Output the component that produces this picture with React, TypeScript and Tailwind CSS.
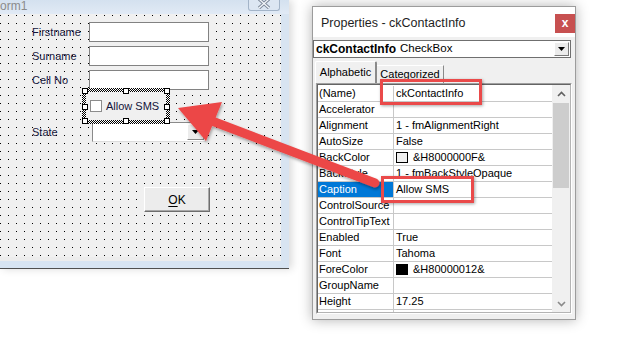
import React from 'react';

type PropRow = {
  name: string;
  value: string;
  swatch?: string;
  selected?: boolean;
};

const propRows: PropRow[] = [
  { name: '(Name)', value: 'ckContactInfo' },
  { name: 'Accelerator', value: '' },
  { name: 'Alignment', value: '1 - fmAlignmentRight' },
  { name: 'AutoSize', value: 'False' },
  { name: 'BackColor', value: '&H8000000F&', swatch: 'bg-[#f0f0f0]' },
  { name: 'BackStyle', value: '1 - fmBackStyleOpaque' },
  { name: 'Caption', value: 'Allow SMS', selected: true },
  { name: 'ControlSource', value: '' },
  { name: 'ControlTipText', value: '' },
  { name: 'Enabled', value: 'True' },
  { name: 'Font', value: 'Tahoma' },
  { name: 'ForeColor', value: '&H80000012&', swatch: 'bg-black' },
  { name: 'GroupName', value: '' },
  { name: 'Height', value: '17.25' },
  { name: '', value: '' },
];

function DownTriangle() {
  return (
    <svg width="7" height="4" viewBox="0 0 7 4">
      <polygon points="0,0 7,0 3.5,4" fill="#000" />
    </svg>
  );
}

function TextBox() {
  return <div className="w-[120px] h-[20px] bg-white border border-[#828282]" />;
}

function DesignerRow({ label, children }: { label: string; children: React.ReactNode }) {
  return (
    <div className="flex items-center h-[20px]">
      <span className="w-[57px] ml-[32px] text-[11px] text-[#14143a]">{label}</span>
      {children}
    </div>
  );
}

function Handle({ pos }: { pos: string }) {
  return <div className={`absolute w-[6px] h-[6px] bg-white border border-black ${pos}`} />;
}

function UserFormDesigner() {
  return (
    <div className="w-[289px] shrink-0 flex flex-col shadow-[3px_0_8px_rgba(0,0,0,0.15)]">
      {/* title bar */}
      <div className="h-[14px] bg-gradient-to-b from-[#d4e1ef] to-[#e1eaf5] flex items-start justify-between">
        <span className="text-[12px] leading-[13px] text-[#8b8b8b]">orm1</span>
        <div className="mr-[9px] w-[32px] h-[11px] border border-t-0 border-[#a3b4c8] rounded-b-[3px] bg-[#dce6f2] flex justify-center">
          <svg width="14" height="9" viewBox="0 0 14 9">
            <path d="M2 -1 L12 8 M12 -1 L2 8" stroke="#7c8797" strokeWidth="3.2" />
            <path d="M2 -1 L12 8 M12 -1 L2 8" stroke="#f3f6fa" strokeWidth="1.3" />
          </svg>
        </div>
      </div>

      <div className="flex">
        {/* dotted design canvas */}
        <div className="w-[281px] h-[247px] border-b-4 border-[#ececec] bg-[#f0f0f0] bg-[image:conic-gradient(at_1px_1px,transparent_75%,#000_0)] bg-[length:8px_8px] bg-[position:0px_1px] pt-[8px] flex flex-col">
          <DesignerRow label="Firstname">
            <TextBox />
          </DesignerRow>
          <div className="mt-[4px]">
            <DesignerRow label="Surname">
              <TextBox />
            </DesignerRow>
          </div>
          <div className="mt-[4px]">
            <DesignerRow label="Cell No">
              <TextBox />
            </DesignerRow>
          </div>

          {/* selected checkbox control */}
          <div className="relative -mt-[2px] ml-[82px] w-[88px] h-[36px] p-[4px] bg-[image:repeating-conic-gradient(#000_0_25%,#fff_0_50%)] bg-[length:2px_2px]">
            <div className="h-full bg-[#f0f0f0] flex items-center">
              <div className="ml-[4px] w-[12px] h-[12px] bg-white border border-[#8c8c8c]" />
              <span className="ml-[4px] text-[11px] text-[#14143a]">Allow SMS</span>
            </div>
            <Handle pos="left-0 top-0" />
            <Handle pos="left-[41px] top-0" />
            <Handle pos="left-[82px] top-0" />
            <Handle pos="left-0 top-[16px]" />
            <Handle pos="left-[82px] top-[16px]" />
            <Handle pos="left-0 top-[30px]" />
            <Handle pos="left-[41px] top-[30px]" />
            <Handle pos="left-[82px] top-[30px]" />
          </div>

          <div className="-mt-[2px] flex items-center h-[20px]">
            <span className="w-[60px] ml-[32px] text-[11px] text-[#14143a]">State</span>
            <div className="w-[114px] h-[20px] bg-white border border-t-[#8a8a8a] border-l-[#8a8a8a] border-r-[#dcdcdc] border-b-[#dcdcdc] flex justify-end items-center pr-[1px]">
              <div className="w-[17px] h-[16px] bg-[#ececec] border border-t-white border-l-white border-r-[#8a8a8a] border-b-[#8a8a8a] flex items-center justify-center">
                <DownTriangle />
              </div>
            </div>
          </div>

          <div className="mt-[45px] ml-[144px] w-[66px] h-[25px] bg-[#ececec] border border-t-white border-l-white border-r-[#6e6e6e] border-b-[#6e6e6e] shadow-[inset_-1px_-1px_0_#a8a8a8] flex items-center justify-center">
            <span className="text-[12px] text-black">
              <span className="underline underline-offset-2">O</span>K
            </span>
          </div>
        </div>
        <div className="w-[8px] bg-[#d8e4f1]" />
      </div>
      <div className="h-[7px] bg-[#d7e4f2]" />
      <div className="h-[1px] bg-[#4f4f4f]" />
    </div>
  );
}

function PropertiesWindow() {
  return (
    <div className="ml-[23px] mt-[6px] w-[264px] h-[314px] border border-[#9c9c9c] bg-[#f0f0f0] flex flex-col shadow-[0_0_12px_rgba(0,0,0,0.3)]">
      <div className="h-[30px] bg-white flex justify-between">
        <span className="pl-[8px] pt-[7px] text-[12.5px] text-[#1e1e1e]">Properties - ckContactInfo</span>
        <div className="mt-[7px] w-[20px] h-[19px] bg-[#c75050] text-white flex items-center justify-center text-[12px] font-bold leading-none pb-[2px]">
          x
        </div>
      </div>

      {/* object selector */}
      <div className="mt-[3px] mr-[4px] h-[18px] bg-white border border-[#6f6f6f] flex items-center">
        <span className="pl-[2px] text-[12px] font-bold text-black">ckContactInfo</span>
        <span className="ml-[4px] text-[11.5px] text-black">CheckBox</span>
        <div className="ml-auto mr-[1px] w-[15px] h-[14px] bg-[#ececec] border border-t-white border-l-white border-r-[#7a7a7a] border-b-[#7a7a7a] flex items-center justify-center">
          <DownTriangle />
        </div>
      </div>

      {/* tabs */}
      <div className="mt-[3px] ml-[2px] h-[22px] flex items-end">
        <div className="w-[62px] h-[22px] border-l border-t border-white border-r-2 border-r-[#8a8a8a] rounded-t-[2px] flex items-center justify-center text-[11px] text-black">
          Alphabetic
        </div>
        <div className="w-[67px] h-[18px] border-t border-white border-r border-r-[#8a8a8a] flex items-center justify-center text-[11px] text-black">
          Categorized
        </div>
      </div>

      {/* property grid */}
      <div className="ml-[3px] w-[256px] h-[231px] border border-t-[#a0a0a0] border-l-[#a0a0a0] border-r-white border-b-white">
        <div className="h-full border border-t-[#646464] border-l-[#646464] border-r-[#b4b4b4] border-b-[#b4b4b4] bg-white flex overflow-hidden">
          <div className="flex-1 pt-[1px]">
            {propRows.map((row, i) => (
              <div key={i} className="h-[16px] flex border-b border-[#c8c8c8]">
                <div
                  className={`w-[76px] border-r border-[#c8c8c8] pl-[1px] text-[11px] leading-[15px] whitespace-nowrap overflow-hidden ${
                    row.selected ? 'bg-[#0078d7] text-white' : 'text-black'
                  }`}
                >
                  {row.name}
                </div>
                <div className="flex-1 pl-[2px] flex items-center text-[11px] leading-[15px] text-black whitespace-nowrap">
                  {row.swatch && (
                    <div className={`w-[12px] h-[11px] border border-black mr-[5px] ${row.swatch}`} />
                  )}
                  {row.value}
                </div>
              </div>
            ))}
          </div>
          {/* scrollbar */}
          <div className="w-[18px] bg-[#f0f0f0] flex flex-col items-center">
            <div className="h-[17px] flex items-center justify-center">
              <svg width="9" height="6" viewBox="0 0 9 6">
                <polyline points="1,5 4.5,1.5 8,5" fill="none" stroke="#606060" strokeWidth="1.6" />
              </svg>
            </div>
            <div className="mt-[1px] w-[16px] h-[85px] bg-[#cdcdcd]" />
            <div className="mt-auto h-[17px] flex items-center justify-center">
              <svg width="9" height="6" viewBox="0 0 9 6">
                <polyline points="1,1 4.5,4.5 8,1" fill="none" stroke="#8a8a8a" strokeWidth="1.6" />
              </svg>
            </div>
          </div>
        </div>
      </div>
    </div>
  );
}

export default function App() {
  return (
    <div className="relative w-[644px] h-[347px] overflow-hidden bg-white flex items-start font-['Liberation_Sans',Arial,sans-serif]">
      <UserFormDesigner />
      <PropertiesWindow />

      {/* annotation boxes */}
      <div className="absolute left-[380px] top-[79px] w-[102px] h-[26px] border-[3px] border-[#ea4a4a] shadow-[1px_1px_3px_rgba(0,0,0,0.35)]" />
      <div className="absolute left-[381px] top-[176px] w-[93px] h-[27px] border-[3px] border-[#ea4a4a] shadow-[1px_1px_3px_rgba(0,0,0,0.35)]" />

      {/* annotation arrow */}
      <svg className="absolute left-0 top-0" width="644" height="347" viewBox="0 0 644 347">
        <defs>
          <filter id="arrowShadow" x="-10%" y="-10%" width="120%" height="130%">
            <feDropShadow dx="1" dy="2" stdDeviation="1.5" floodColor="#000" floodOpacity="0.35" />
          </filter>
        </defs>
        <g filter="url(#arrowShadow)">
          <line x1="212" y1="121" x2="375" y2="183" stroke="#ec4747" strokeWidth="9" strokeLinecap="round" />
          <polygon points="178,108 222,102 206,141" fill="#ec4747" />
        </g>
      </svg>
    </div>
  );
}
